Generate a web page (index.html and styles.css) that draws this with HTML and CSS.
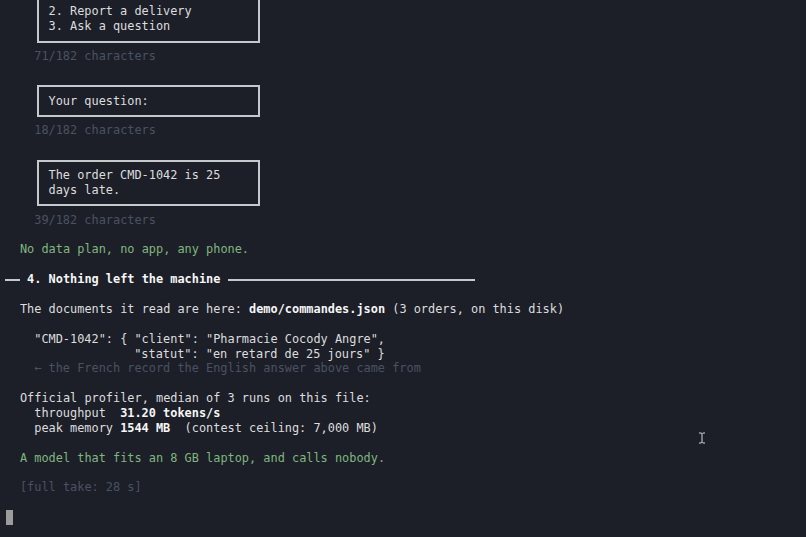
FILE: index.html
```html
<!DOCTYPE html>
<html lang="en">
<head>
<meta charset="utf-8">
<title>Terminal</title>
<link rel="stylesheet" href="styles.css">
</head>
<body>
<main class="term">
  <div class="box box-open">
    <div class="ln">2. Report a delivery</div>
    <div class="ln">3. Ask a question</div>
  </div>
  <div class="ln dim in4">71/182 characters</div>
  <div class="ln"></div>
  <div class="box">
    <div class="ln">Your question:</div>
  </div>
  <div class="ln dim in4">18/182 characters</div>
  <div class="ln"></div>
  <div class="box">
    <div class="ln">The order CMD-1042 is 25</div>
    <div class="ln">days late.</div>
  </div>
  <div class="ln dim in4">39/182 characters</div>
  <div class="ln"></div>
  <div class="ln green in2">No data plan, no app, any phone.</div>
  <div class="ln"></div>
  <div class="ln rule"><span class="bar bar-lead"></span><b class="hd"> 4. Nothing left the machine </b><span class="bar bar-tail"></span></div>
  <div class="ln"></div>
  <div class="ln in2">The documents it read are here: <b>demo/commandes.json</b> (3 orders, on this disk)</div>
  <div class="ln"></div>
  <div class="ln in4">"CMD-1042": { "client": "Pharmacie Cocody Angre",</div>
  <div class="ln in18">"statut": "en retard de 25 jours" }</div>
  <div class="ln dim in4">← the French record the English answer above came from</div>
  <div class="ln"></div>
  <div class="ln in2">Official profiler, median of 3 runs on this file:</div>
  <div class="ln in4">throughput  <b>31.20 tokens/s</b></div>
  <div class="ln in4">peak memory <b>1544 MB</b>  (contest ceiling: 7,000 MB)</div>
  <div class="ln"></div>
  <div class="ln green in2">A model that fits an 8 GB laptop, and calls nobody.</div>
  <div class="ln"></div>
  <div class="ln dim in2">[full take: 28 s]</div>
  <div class="ln"></div>
  <div class="ln"><span class="cursor"></span></div>
</main>
<svg class="ibeam" width="8" height="12" viewBox="0 0 8 12" aria-hidden="true">
  <path d="M1 1h2.2l0.8 0.8 0.8-0.8H7M4 1.8v8.4M1 11h2.2l0.8-0.8 0.8 0.8H7" fill="none" stroke="#1c1f28" stroke-width="2.2"/>
  <path d="M1 1h2.2l0.8 0.8 0.8-0.8H7M4 1.8v8.4M1 11h2.2l0.8-0.8 0.8 0.8H7" fill="none" stroke="#d8d8d8" stroke-width="1"/>
</svg>
</body>
</html>
```

FILE: styles.css
```css
:root {
  --cw: 7.14px;
  --lh: 14.88px;
  --top: 4.4px;
  --bg: #1c1f28;
  --fg: #dcdddf;
  --bright: #f6f6f6;
  --dim: #4a5261;
  --green: #80b67f;
  --line: #c5c8cd;
}

html, body {
  margin: 0;
  padding: 0;
  background: var(--bg);
  height: 100%;
  overflow: hidden;
}

.term {
  padding: var(--top) 0 0 5.7px;
  font-family: "DejaVu Sans Mono", "Liberation Mono", monospace;
  font-size: 11.9px;
  line-height: var(--lh);
  color: var(--fg);
}

.ln {
  height: var(--lh);
  white-space: pre;
}

b {
  font-weight: bold;
  color: var(--bright);
}

.in2 { padding-left: calc(2 * var(--cw)); }
.in4 { padding-left: calc(4 * var(--cw)); }
.in18 { padding-left: calc(18 * var(--cw)); }

.dim { color: var(--dim); }
.green { color: var(--green); }

.box {
  box-sizing: border-box;
  width: calc(31 * var(--cw) + 2px);
  margin: calc(var(--lh) / 2 - 1px) 0 calc(var(--lh) / 2 - 1px) calc(4.5 * var(--cw) - 1px);
  padding: calc(var(--lh) / 2 - 1px) 0 calc(var(--lh) / 2 - 1px) calc(1.5 * var(--cw) - 1px);
  border: 2px solid var(--line);
}

.box-open {
  border-top: none;
  margin-top: calc(-1 * var(--top));
  padding-top: var(--top);
}

.rule {
  display: flex;
  align-items: center;
}

.hd {
  white-space: pre;
}

.bar {
  display: block;
  height: 2px;
  background: var(--line);
}

.bar-lead {
  width: calc(2 * var(--cw) + 1px);
  margin-left: -1px;
}

.bar-tail {
  width: calc(34.6 * var(--cw));
}

.cursor {
  display: inline-block;
  width: var(--cw);
  height: var(--lh);
  vertical-align: top;
  background: #9c9c9c;
}

.ibeam {
  position: absolute;
  left: 698px;
  top: 432px;
}
```
